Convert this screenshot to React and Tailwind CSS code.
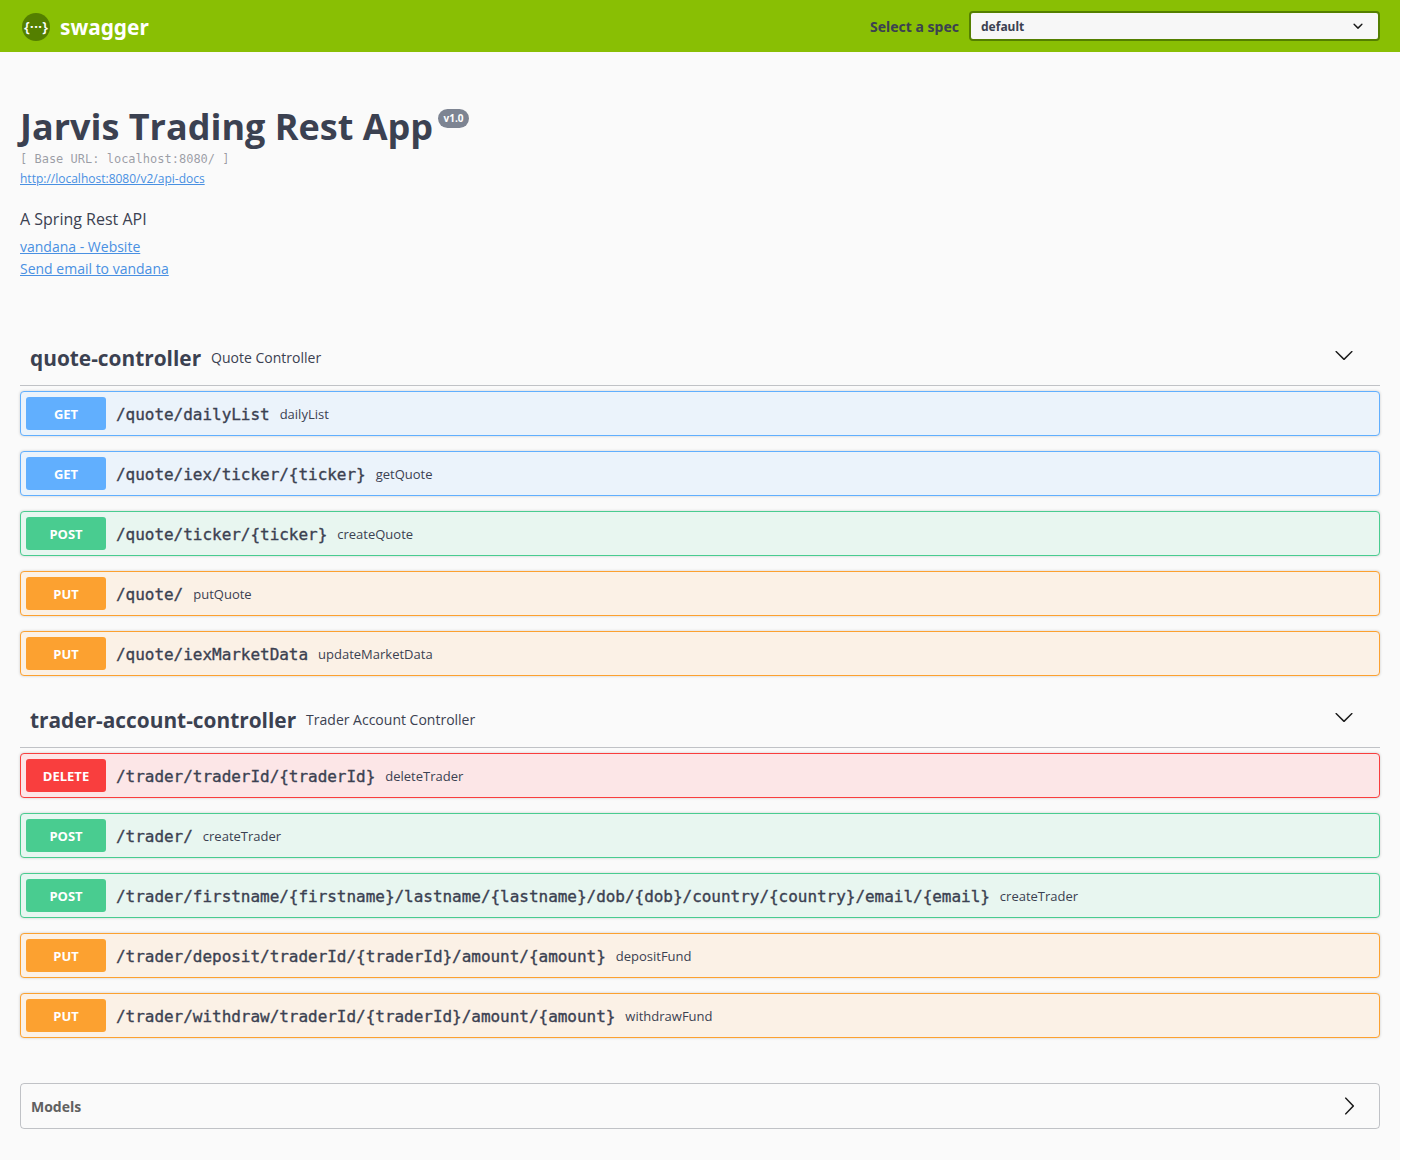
import React from 'react';

const sans = "font-['Open_Sans',sans-serif]";

const methodStyles = {
    GET: { row: 'bg-[#ebf3fb] border-[#61affe] shadow-[0_0_3px_rgba(0,0,0,0.19)]', badge: 'bg-[#61affe]' },
    POST: { row: 'bg-[#e8f6f0] border-[#49cc90] shadow-[0_0_3px_rgba(0,0,0,0.19)]', badge: 'bg-[#49cc90]' },
    PUT: { row: 'bg-[#fbf1e6] border-[#fca130] shadow-[0_0_3px_rgba(0,0,0,0.19)]', badge: 'bg-[#fca130]' },
    DELETE: { row: 'bg-[#fce6e7] border-[#f93e3e] shadow-[0_0_3px_rgba(0,0,0,0.19)]', badge: 'bg-[#f93e3e]' },
};

const quoteOps = [
    ['GET', '/quote/dailyList', 'dailyList'],
    ['GET', '/quote/iex/ticker/{ticker}', 'getQuote'],
    ['POST', '/quote/ticker/{ticker}', 'createQuote'],
    ['PUT', '/quote/', 'putQuote'],
    ['PUT', '/quote/iexMarketData', 'updateMarketData'],
];

const traderOps = [
    ['DELETE', '/trader/traderId/{traderId}', 'deleteTrader'],
    ['POST', '/trader/', 'createTrader'],
    ['POST', '/trader/firstname/{firstname}/lastname/{lastname}/dob/{dob}/country/{country}/email/{email}', 'createTrader'],
    ['PUT', '/trader/deposit/traderId/{traderId}/amount/{amount}', 'depositFund'],
    ['PUT', '/trader/withdraw/traderId/{traderId}/amount/{amount}', 'withdrawFund'],
];

const Operation = ({ method, path, summary }) => {
    const style = methodStyles[method];
    return (
        <div className={`flex items-center h-[45px] mb-[15px] p-[5px] border rounded ${style.row}`}>
            <span className={`w-20 h-[33px] pt-0.5 flex items-center justify-center rounded-[3px] text-white text-[13px] font-bold ${sans} ${style.badge}`}>
                {method}
            </span>
            <span className="px-[10px] pt-0.5 font-['DejaVu_Sans_Mono',monospace] text-[16px] tracking-[-0.03px] text-[#3b4151] [-webkit-text-stroke:0.35px_#3b4151]">{path}</span>
            <span className={`pt-0.5 text-[13px] text-[#3b4151] ${sans}`}>{summary}</span>
        </div>
    );
};

const Section = ({ name, description, ops }) => (
    <div>
        <div className="flex items-center h-[57px] pt-px px-[10px] mb-[5px] border-b border-[#3b4151]/30">
            <span className={`pt-0.5 text-[20.85px] font-bold text-[#3b4151] ${sans}`}>{name}</span>
            <span className={`ml-[10px] text-sm text-[#3b4151] ${sans}`}>{description}</span>
            <svg className="ml-auto mr-[16px] mb-1.5" width="20" height="20" viewBox="0 0 20 20" fill="#1a1a1a">
                <path d="M17.418 6.109c.272-.268.709-.268.979 0s.271.701 0 .969l-7.908 7.83c-.27.268-.707.268-.979 0l-7.908-7.83c-.27-.268-.27-.701 0-.969.271-.268.709-.268.979 0L10 13.25l7.418-7.141z" />
            </svg>
        </div>
        {ops.map(([method, path, summary]) => (
            <Operation key={path} method={method} path={path} summary={summary} />
        ))}
    </div>
);

export default function App() {
    return (
        <div className={`w-[1400px] h-[1160px] bg-[#fafafa] ${sans}`}>
            {/* Top bar */}
            <div className="flex items-center h-[52px] pl-5 pr-5 bg-[#89bf04]">
                <svg width="30" height="30" viewBox="0 0 30 30" className="ml-px mt-0.5">
                    <circle cx="15" cy="15" r="14" fill="#547f00" />
                    <text x="15" y="20" textAnchor="middle" fill="#fff" fontSize="15" fontWeight="600" fontFamily="'Open Sans',sans-serif">{'{···}'}</text>
                </svg>
                <span className="ml-[9px] pt-0.5 text-[20.8px] font-bold text-white leading-none font-['Noto_Sans',sans-serif]">swagger</span>
                <span className="ml-auto pt-0.5 text-sm font-bold text-[#3b4151] font-['Noto_Sans',sans-serif]">Select a spec</span>
                <div className="ml-[10px] flex items-center justify-between w-[411px] h-[30px] pl-[10px] pr-[10px] bg-[#f7f7f7] border-2 border-[#547f00] rounded">
                    <span className="pt-0.5 text-xs font-bold text-[#3b4151] font-['Noto_Sans',sans-serif]">default</span>
                    <svg width="20" height="20" viewBox="0 0 20 20" fill="#1a1a1a">
                        <path d="M13.418 7.859a.695.695 0 0 1 .978 0 .68.68 0 0 1 0 .969l-3.908 3.83a.697.697 0 0 1-.979 0l-3.908-3.83a.68.68 0 0 1 0-.969.695.695 0 0 1 .978 0L10 11l3.418-3.141z" />
                    </svg>
                </div>
            </div>

            <div className="px-5">
                {/* Info */}
                <div className="pt-[50px] h-[277px]">
                    <div className="flex items-start">
                        <h1 className="text-4xl font-bold text-[#3b4151] leading-[50px]">Jarvis Trading Rest App</h1>
                        <span className="ml-[5px] mt-[7px] h-[19px] px-[5.5px] rounded-full bg-[#7d8492] text-white text-[10px] font-bold leading-[19px]">v1.0</span>
                    </div>
                    <div className="-mt-px font-['DejaVu_Sans_Mono',monospace] text-xs text-[#3b4151]/50 leading-4">[ Base URL: localhost:8080/ ]</div>
                    <a href="#" className="block mt-1 text-xs leading-4 text-[#4990e2] underline">http://localhost:8080/v2/api-docs</a>
                    <p className="mt-[20px] text-[16px] text-[#3b4151] leading-6">A Spring Rest API</p>
                    <a href="#" className="block mt-[5px] text-sm leading-[22px] text-[#4990e2] underline">vandana - Website</a>
                    <a href="#" className="block text-sm leading-[22px] text-[#4990e2] underline">Send email to vandana</a>
                </div>

                <Section name="quote-controller" description="Quote Controller" ops={quoteOps} />
                <Section name="trader-account-controller" description="Trader Account Controller" ops={traderOps} />

                {/* Models */}
                <div className="flex items-center justify-between h-[46px] mt-[45px] pl-[10px] pr-5 border border-[#3b4151]/30 rounded">
                    <span className="pt-0.5 text-sm font-bold text-[#606060]">Models</span>
                    <svg width="20" height="20" viewBox="0 0 20 20" fill="#1a1a1a">
                        <path d="M13.25 10L6.109 2.58c-.268-.27-.268-.707 0-.979.268-.27.701-.27.969 0l7.83 7.908c.268.271.268.709 0 .979l-7.83 7.908c-.268.271-.701.27-.969 0-.268-.269-.268-.707 0-.979L13.25 10z" />
                    </svg>
                </div>
            </div>
        </div>
    );
}
